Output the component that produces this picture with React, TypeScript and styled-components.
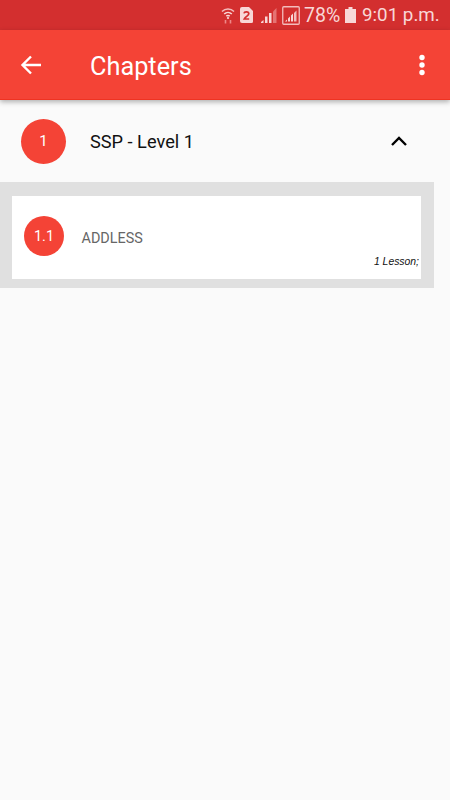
import React from "react";
import styled, { createGlobalStyle } from "styled-components";

const Global = createGlobalStyle`
  html, body { margin: 0; padding: 0; background: #fafafa; }
  body { font-family: Roboto, "Liberation Sans", sans-serif; }
`;

const Screen = styled.div`
  width: 450px;
  height: 800px;
  background: #fafafa;
  overflow: hidden;
  display: flex;
  flex-direction: column;
`;

const StatusBar = styled.div`
  height: 30px;
  flex: none;
  background: #d32f2f;
  color: #f8d7d7;
  display: flex;
  align-items: center;
  padding-left: 221px;
  font-size: 18.8px;
`;

const StatusIcons = styled.div`
  display: flex;
  align-items: center;
  gap: 5px;
`;

const Percent = styled.span`
  margin-left: 4px;
  width: 41px;
  font-size: 19.5px;
`;

const Time = styled.span`
  margin-left: 6px;
`;

const AppBar = styled.header`
  height: 70px;
  flex: none;
  box-sizing: border-box;
  background: #f44336;
  border-bottom: 1px solid #ee3322;
  box-shadow: 0 2px 5px rgba(0, 0, 0, 0.3);
  display: flex;
  align-items: center;
  color: #fff;
  padding: 0 25px 0 20px;
  position: relative;
  z-index: 1;
`;

const Title = styled.h1`
  margin: 3px 0 0 48px;
  flex: 1;
  font-size: 25.3px;
  font-weight: 400;
  line-height: 67px;
`;

const ChapterRow = styled.div`
  height: 82px;
  flex: none;
  display: flex;
  align-items: center;
  padding: 0 43px 0 21px;
`;

const Badge = styled.div<{ $size: number; $font: number }>`
  width: ${(p) => p.$size}px;
  height: ${(p) => p.$size}px;
  border-radius: 50%;
  background: #f44336;
  color: #fff;
  font-size: ${(p) => p.$font}px;
  display: flex;
  align-items: center;
  justify-content: center;
  flex: none;
`;

const ChapterName = styled.span`
  margin-left: 24px;
  flex: 1;
  font-size: 18.2px;
  color: #111;
`;

const Panel = styled.section`
  width: 434px;
  height: 106px;
  box-sizing: border-box;
  background: #e0e0e0;
  padding: 14px 13px 9px 12px;
`;

const Card = styled.div`
  height: 83px;
  background: #fff;
  box-sizing: border-box;
  padding: 20px 2px 0 12px;
  display: flex;
  flex-direction: column;
`;

const LessonLine = styled.div`
  display: flex;
  align-items: center;
`;

const LessonName = styled.span`
  margin: 4px 0 0 17.5px;
  font-size: 14.4px;
  color: #666;
`;

const LessonCount = styled.div`
  margin-top: -1px;
  text-align: right;
  font: italic 10.4px "Liberation Sans", Arial, sans-serif;
  line-height: 13px;
  color: #111;
`;

export default function App() {
  return (
    <Screen>
      <Global />
      <StatusBar>
        <StatusIcons>
          <svg width="14" height="18" viewBox="0 0 14 18" fill="none">
            <path d="M1 5.500a8.500 8.500 0 0 1 12 0" stroke="#f3bcbc" strokeWidth="1.600" />
            <path d="M3.200 8a5.500 5.500 0 0 1 7.600 0" stroke="#f8d7d7" strokeWidth="1.600" />
            <path d="M5.300 10.200a2.600 2.600 0 0 1 3.400 0" stroke="#f8d7d7" strokeWidth="1.600" />
            <circle cx="7" cy="12" r="1.100" fill="#f8d7d7" />
            <path d="M4.500 14v3.500M9.500 14v3.500" stroke="#e88" strokeWidth="1.600" />
          </svg>
          <svg width="13" height="16" viewBox="0 0 13 16">
            <path d="M2 0h7l4 4v10.500a1.500 1.500 0 0 1-1.500 1.500h-9.500a2 2 0 0 1-2-2v-12a2 2 0 0 1 2-2z" fill="#f8d7d7" />
            <path d="M4 6.300c.3-2 4.800-2 4.800.5 0 1.800-3.600 3-4.600 5.200h5" fill="none" stroke="#d32f2f" strokeWidth="1.700" />
          </svg>
          <svg width="16" height="16" viewBox="0 0 16 16" style={{ marginLeft: 3 }}>
            <path d="M0 16h2.500v-3l-2.500 2zM4 16h2.500v-6.500h-2.500zM8 16h2.500v-10h-2.500z" fill="#f8d7d7" />
            <path d="M12 16h3.500v-15l-3.500 3.500z" fill="#e57373" />
          </svg>
          <svg width="18" height="19" viewBox="0 0 18 19" fill="none">
            <rect x=".75" y=".75" width="16.500" height="17.500" rx="1" fill="none" stroke="#f3bcbc" strokeWidth="1.300" />
            <path d="M3 15.500h2v-2zM6 15.500h2v-5l-2 2zM9 15.500h2v-8l-2 2z" fill="#f8d7d7" />
            <path d="M12 15.500h2.500v-11l-2.500 2.500z" fill="#f3bcbc" />
          </svg>
        </StatusIcons>
        <Percent>78%</Percent>
        <svg width="11" height="16" viewBox="0 0 11 16">
          <path d="M3.500 0h4v2h3.500v14h-11v-14h3.500z" fill="#f8d7d7" />
        </svg>
        <Time>9:01 p.m.</Time>
      </StatusBar>

      <AppBar>
        <svg width="22" height="22" viewBox="0 0 22 22" fill="none" stroke="#fff" strokeWidth="2.400" style={{ marginTop: 1 }}>
          <path d="M21 11h-18M11 2.500l-8.500 8.500 8.500 8.500" />
        </svg>
        <Title>Chapters</Title>
        <svg width="6" height="22" viewBox="0 0 6 22" fill="#fff">
          <circle cx="3" cy="3.500" r="2.700" />
          <circle cx="3" cy="11" r="2.700" />
          <circle cx="3" cy="18.500" r="2.700" />
        </svg>
      </AppBar>

      <ChapterRow>
        <Badge $size={45} $font={15}>1</Badge>
        <ChapterName>SSP - Level 1</ChapterName>
        <svg width="16" height="10" viewBox="0 0 16 10" fill="none" stroke="#000" strokeWidth="2.400">
          <path d="M1 9l7-7 7 7" />
        </svg>
      </ChapterRow>

      <Panel>
        <Card>
          <LessonLine>
            <Badge $size={40} $font={14.5}>1.1</Badge>
            <LessonName>ADDLESS</LessonName>
          </LessonLine>
          <LessonCount>1 Lesson;</LessonCount>
        </Card>
      </Panel>
    </Screen>
  );
}
